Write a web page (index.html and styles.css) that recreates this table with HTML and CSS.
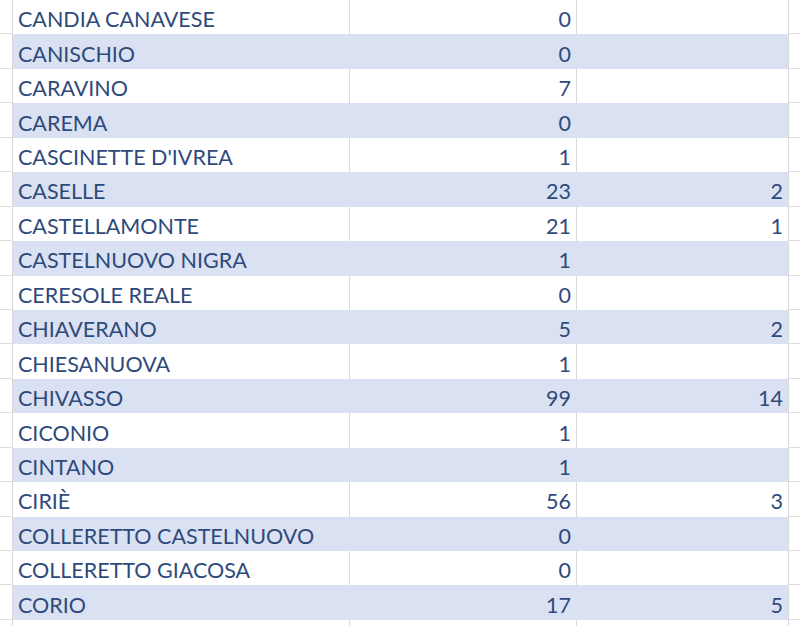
FILE: index.html
```html
<!DOCTYPE html>
<html>
<head>
<meta charset="utf-8">
<link rel="stylesheet" href="styles.css">
</head>
<body>
<div class="sheet">
  <div class="row"><div class="gut"></div><div class="c name">CANDIA CANAVESE</div><div class="c num">0</div><div class="c num last"></div><div class="gut end"></div></div>
  <div class="row band"><div class="gut"></div><div class="c name">CANISCHIO</div><div class="c num">0</div><div class="c num last"></div><div class="gut end"></div></div>
  <div class="row"><div class="gut"></div><div class="c name">CARAVINO</div><div class="c num">7</div><div class="c num last"></div><div class="gut end"></div></div>
  <div class="row band"><div class="gut"></div><div class="c name">CAREMA</div><div class="c num">0</div><div class="c num last"></div><div class="gut end"></div></div>
  <div class="row"><div class="gut"></div><div class="c name">CASCINETTE D'IVREA</div><div class="c num">1</div><div class="c num last"></div><div class="gut end"></div></div>
  <div class="row band"><div class="gut"></div><div class="c name">CASELLE</div><div class="c num">23</div><div class="c num last">2</div><div class="gut end"></div></div>
  <div class="row"><div class="gut"></div><div class="c name">CASTELLAMONTE</div><div class="c num">21</div><div class="c num last">1</div><div class="gut end"></div></div>
  <div class="row band"><div class="gut"></div><div class="c name">CASTELNUOVO NIGRA</div><div class="c num">1</div><div class="c num last"></div><div class="gut end"></div></div>
  <div class="row"><div class="gut"></div><div class="c name">CERESOLE REALE</div><div class="c num">0</div><div class="c num last"></div><div class="gut end"></div></div>
  <div class="row band"><div class="gut"></div><div class="c name">CHIAVERANO</div><div class="c num">5</div><div class="c num last">2</div><div class="gut end"></div></div>
  <div class="row"><div class="gut"></div><div class="c name">CHIESANUOVA</div><div class="c num">1</div><div class="c num last"></div><div class="gut end"></div></div>
  <div class="row band"><div class="gut"></div><div class="c name">CHIVASSO</div><div class="c num">99</div><div class="c num last">14</div><div class="gut end"></div></div>
  <div class="row"><div class="gut"></div><div class="c name">CICONIO</div><div class="c num">1</div><div class="c num last"></div><div class="gut end"></div></div>
  <div class="row band"><div class="gut"></div><div class="c name">CINTANO</div><div class="c num">1</div><div class="c num last"></div><div class="gut end"></div></div>
  <div class="row"><div class="gut"></div><div class="c name">CIRIÈ</div><div class="c num">56</div><div class="c num last">3</div><div class="gut end"></div></div>
  <div class="row band"><div class="gut"></div><div class="c name">COLLERETTO CASTELNUOVO</div><div class="c num">0</div><div class="c num last"></div><div class="gut end"></div></div>
  <div class="row"><div class="gut"></div><div class="c name">COLLERETTO GIACOSA</div><div class="c num">0</div><div class="c num last"></div><div class="gut end"></div></div>
  <div class="row band"><div class="gut"></div><div class="c name">CORIO</div><div class="c num">17</div><div class="c num last">5</div><div class="gut end"></div></div>
  <div class="row"><div class="gut"></div><div class="c name"></div><div class="c num"></div><div class="c num last"></div><div class="gut end"></div></div>
</div>
</body>
</html>
```
FILE: styles.css
```css
html, body {
  margin: 0;
  padding: 0;
  background: #ffffff;
}

.sheet {
  display: flex;
  flex-direction: column;
  width: 800px;
  height: 626px;
  overflow: hidden;
  font-family: "Lato", "Open Sans", sans-serif;
  font-size: 21.5px;
  color: #2e4a7b;
}

.row {
  display: grid;
  grid-template-columns: 13px 337px 227px 212px 1fr;
  height: 34.44px;
  flex: none;
}

.gut,
.c {
  box-sizing: border-box;
  border-right: 1px solid #d9d9d9;
  display: flex;
  align-items: flex-end;
  padding-bottom: 3.7px;
  line-height: 1;
  white-space: nowrap;
}

.gut {
  border-bottom: 1px solid #dedede;
}

.gut.end {
  border-right: none;
}

.name {
  padding-left: 5px;
}

.num {
  justify-content: flex-end;
  padding-right: 5px;
}

.band .c {
  background: #d9e1f2;
  border-right-color: #d9e1f2;
}

.band .c.last {
  border-right-color: #d9d9d9;
}
```
